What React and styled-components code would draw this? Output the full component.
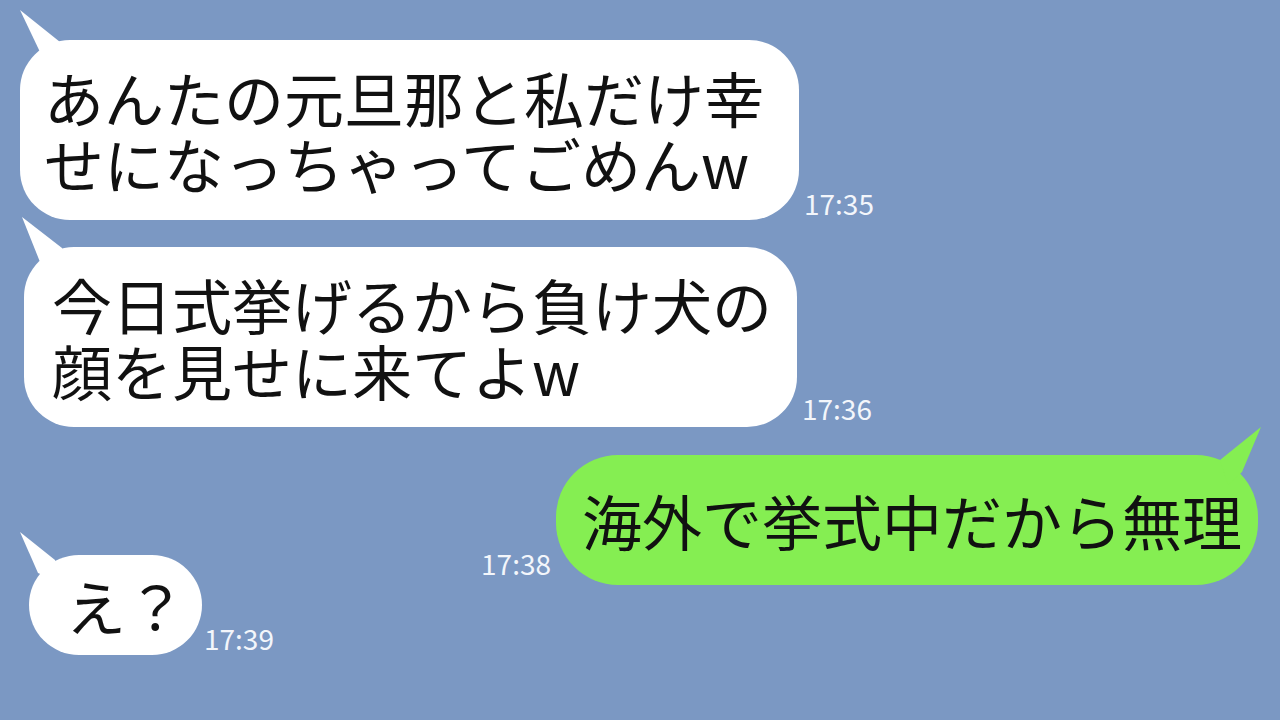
import React from "react";
import styled, { createGlobalStyle } from "styled-components";

const GlobalStyle = createGlobalStyle`
  html, body {
    margin: 0;
    padding: 0;
    background: #7b98c3;
    overflow: hidden;
  }
  * { box-sizing: border-box; }
`;

const Screen = styled.div`
  width: 1280px;
  height: 720px;
  background: #7b98c3;
  padding-top: 40px;
  display: flex;
  flex-direction: column;
  font-family: "Noto Sans CJK JP", "Noto Sans", sans-serif;
`;

const Row = styled.div`
  display: flex;
  align-items: flex-end;
  justify-content: ${p => (p.$mine ? "flex-end" : "flex-start")};
  margin-top: ${p => p.$top || 0}px;
  padding-left: ${p => p.$left || 0}px;
  padding-right: ${p => p.$right || 0}px;
`;

const Bubble = styled.div`
  position: relative;
  background: ${p => (p.$mine ? "#85ee52" : "#ffffff")};
  color: #111;
  font-size: 60px;
  line-height: 66px;
  font-weight: 400;
  white-space: nowrap;
  border-radius: ${p => p.$radius || 50}px;
  padding: ${p => p.$pad};
`;

const Line = styled.div`
  height: 66px;
`;

// the little pointed tail sticking out of the top corner
const Tail = styled.span`
  position: absolute;
  top: -40px;
  width: 70px;
  height: 70px;
  background: inherit;
  ${p => (p.$mine ? "right: -12px;" : "left: -12px;")}
  clip-path: polygon(${p => p.$points});
`;

const Time = styled.span`
  font-size: 28px;
  line-height: 28px;
  color: #f3f6fb;
  margin: 0 ${p => p.$gap || 5}px ${p => p.$bottom || 3}px;
  white-space: nowrap;
`;

const messages = [
  {
    lines: ["あんたの元旦那と私だけ幸", "せになっちゃってごめんw"],
    time: "17:35",
    top: 0,
    left: 20,
    pad: "24px 35px 24px 24px",
    tail: "12px 10px, 52px 42px, 60px 68px, 32px 52px",
    timeBottom: 0
  },
  {
    lines: ["今日式挙げるから負け犬の", "顔を見せに来てよw"],
    time: "17:36",
    top: 27,
    left: 24,
    pad: "24px 25px 24px 28px",
    tail: "10px 10px, 50px 41px, 58px 68px, 28px 55px",
    timeBottom: 5
  },
  {
    mine: true,
    lines: ["海外で挙式中だから無理"],
    time: "17:38",
    top: 28,
    right: 22,
    pad: "32px 16px 32px 26px",
    radius: 62,
    tail: "61px 12px, 42px 57px, 28px 70px, 20px 45px",
    timeBottom: 8
  },
  {
    lines: ["え？"],
    time: "17:39",
    top: -30,
    left: 29,
    pad: "17px 16px 17px 37px",
    tail: "3px 17px, 38px 45px, 45px 68px, 21px 58px",
    timeBottom: 3,
    gap: 2
  }
];

const App = () => (
  <>
    <GlobalStyle />
    <Screen>
      {messages.map((m, i) => (
        <Row key={i} $mine={m.mine} $top={m.top} $left={m.left} $right={m.right}>
          {m.mine && <Time $bottom={m.timeBottom}>{m.time}</Time>}
          <Bubble $mine={m.mine} $pad={m.pad} $radius={m.radius}>
            <Tail $mine={m.mine} $points={m.tail} />
            {m.lines.map((l, j) => (
              <Line key={j}>{l}</Line>
            ))}
          </Bubble>
          {!m.mine && (
            <Time $bottom={m.timeBottom} $gap={m.gap}>
              {m.time}
            </Time>
          )}
        </Row>
      ))}
    </Screen>
  </>
);

export default App;
